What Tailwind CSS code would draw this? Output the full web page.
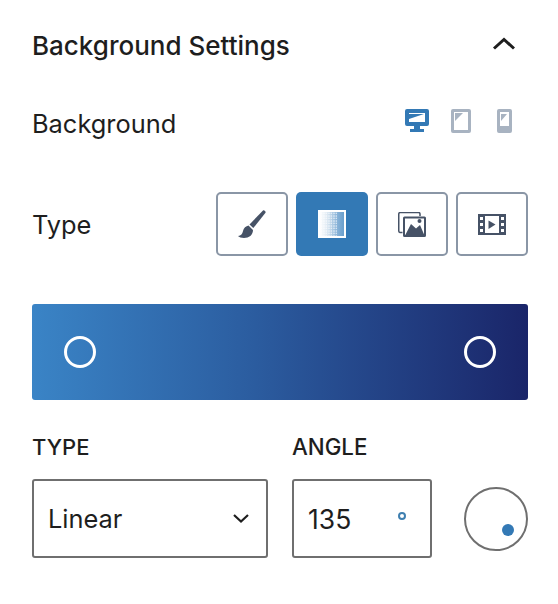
<!DOCTYPE html>
<html lang="en">
<head>
    <meta charset="UTF-8">
    <meta name="viewport" content="width=device-width, initial-scale=1.0">
    <title>Background Settings</title>
    <script src="https://cdn.jsdelivr.net/npm/@tailwindcss/browser@4"></script>
</head>
<body class="bg-white font-['Inter',sans-serif] text-[#1e1e1e] w-[558px] h-[604px] overflow-hidden">
    <div class="pl-8 pr-[30px] pt-[28px]">
        <!-- header -->
        <div class="flex items-center justify-between h-9">
            <h2 class="text-[26px] leading-9 font-medium">Background Settings</h2>
            <svg class="mr-[12px] -mt-[7px]" width="24" height="14" viewBox="0 0 24 14" fill="none">
                <path d="M2 12.500 L12 3.500 L22 12.500" stroke="#1e1e1e" stroke-width="3"/>
            </svg>
        </div>

        <!-- background row -->
        <div class="flex items-center justify-between h-9 mt-[42px]">
            <span class="text-[25.400px] leading-9">Background</span>
            <div class="flex items-center mr-4 -mt-[6px]">
                <svg width="24" height="24" viewBox="0 0 24 24">
                    <path fill-rule="evenodd" d="M2 0h20a2 2 0 0 1 2 2v13a2 2 0 0 1-2 2h-7v3h4v3H5v-3h4v-3H2a2 2 0 0 1-2-2V2a2 2 0 0 1 2-2zM4 4v9h16V4z" fill="#3379b5"/>
                    <path d="M4 5h15L4 10z" fill="#3379b5"/>
                </svg>
                <svg class="ml-[22px]" width="20" height="24" viewBox="0 0 20 24">
                    <path fill-rule="evenodd" d="M2 0h16a2 2 0 0 1 2 2v20a2 2 0 0 1-2 2H2a2 2 0 0 1-2-2V2a2 2 0 0 1 2-2zM3 3v18h14V3z" fill="#a8b3c1"/>
                    <path d="M4 4h8L4 12z" fill="#a8b3c1"/>
                </svg>
                <svg class="ml-[26px]" width="15" height="24" viewBox="0 0 15 24">
                    <path fill-rule="evenodd" d="M2 0h11a2 2 0 0 1 2 2v20a2 2 0 0 1-2 2H2a2 2 0 0 1-2-2V2a2 2 0 0 1 2-2zM3 3v14h9V3z" fill="#a8b3c1"/>
                    <path d="M4 5h6L4 12z" fill="#a8b3c1"/>
                </svg>
            </div>
        </div>

        <!-- type row -->
        <div class="flex items-center justify-between mt-[50px]">
            <span class="text-[25.400px] leading-9 pt-[2px]">Type</span>
            <div class="flex gap-2">
                <button class="w-[72px] h-16 rounded-[5px] border-2 border-[#8a96a6] bg-white flex items-center justify-center">
                    <svg width="28" height="28" viewBox="0 0 28 28">
                        <path d="M25 .500c1.200-.800 3 1 2.500 2.300L15.300 18 11.500 14.500z" fill="#465266"/>
                        <path d="M10.500 15.500L15 20c0 5-4 8-9 8-2.500 0-5-1-6-2 4-.500 4.500-3 5-5 .500-3 3-5 5.500-5.500z" fill="#465266"/>
                    </svg>
                </button>
                <button class="w-[72px] h-16 rounded-[5px] bg-[#3379b5] flex items-center justify-center">
                    <svg width="28" height="28" viewBox="0 0 28 28">
                        <defs>
                            <linearGradient id="halftoneFill" x1="0" x2="1" y1="0" y2="0">
                                <stop offset="0" stop-color="#ffffff"/>
                                <stop offset="0.300" stop-color="#dce8f2"/>
                                <stop offset="0.650" stop-color="#8fb7da"/>
                                <stop offset="1" stop-color="#6a9fcc"/>
                            </linearGradient>
                            <pattern id="halftoneDots" width="2.500" height="2.500" patternUnits="userSpaceOnUse">
                                <rect x="0.300" y="0.300" width="1.400" height="1.400" fill="#ffffff"/>
                            </pattern>
                        </defs>
                        <rect width="28" height="28" fill="#ffffff"/>
                        <rect x="2" y="2" width="24" height="24" fill="url(#halftoneFill)"/>
                        <rect x="2" y="2" width="17" height="24" fill="url(#halftoneDots)" opacity="0.800"/>
                    </svg>
                </button>
                <button class="w-[72px] h-16 rounded-[5px] border-2 border-[#8a96a6] bg-white flex items-center justify-center">
                    <svg width="28" height="25" viewBox="0 0 28 25">
                        <path d="M22 4V2a1.500 1.500 0 0 0-1.500-1.500H2A1.500 1.500 0 0 0 .750 2v17a1.500 1.500 0 0 0 1.250 1.500h2.500" fill="none" stroke="#465266" stroke-width="1.500"/>
                        <path fill-rule="evenodd" d="M6.500 4.500h20a1.500 1.500 0 0 1 1.500 1.500v17.500a1.500 1.500 0 0 1-1.500 1.500h-20a1.500 1.500 0 0 1-1.500-1.500V6a1.500 1.500 0 0 1 1.500-1.500zM7 6.500v16.500h19V6.500z" fill="#465266"/>
                        <path d="M7 23.500l6-11.500 5 4.500 4-3.500 4.500 10.500z" fill="#465266"/>
                        <circle cx="21.500" cy="9" r="2" fill="#465266"/>
                    </svg>
                </button>
                <button class="w-[72px] h-16 rounded-[5px] border-2 border-[#8a96a6] bg-white flex items-center justify-center">
                    <svg width="28" height="21" viewBox="0 0 28 21">
                        <path fill-rule="evenodd" d="M0 0h28v21H0zM2 3v3h3V3zM2 9v3h3V9zM2 15v3h3v-3zM23 3v3h3V3zM23 9v3h3V9zM23 15v3h3v-3zM7 2v17h14V2z" fill="#465266"/>
                        <path d="M10.500 6.500l7 4-7 4.500z" fill="#465266"/>
                    </svg>
                </button>
            </div>
        </div>

        <!-- gradient preview -->
        <div class="relative h-24 mt-12 rounded-[3px] bg-[linear-gradient(90deg,#3a84c6_0%,#2b5c9f_45%,#1a2569_100%)]">
            <span class="absolute left-8 top-8 w-8 h-8 rounded-full border-[3px] border-white"></span>
            <span class="absolute right-8 top-8 w-8 h-8 rounded-full border-[3px] border-white"></span>
        </div>

        <!-- type + angle -->
        <div class="flex items-end mt-[35px]">
            <div class="w-[236px]">
                <label class="block text-[22px] leading-6 font-medium mb-5">TYPE</label>
                <div class="h-[79px] rounded-[3px] border-2 border-[#6f6f6f] flex items-center justify-between pl-[14px] pr-[16px]">
                    <span class="text-[25.400px] pt-[2px]">Linear</span>
                    <svg width="18" height="11" viewBox="0 0 18 11" fill="none">
                        <path d="M2 2L9 8.500L16 2" stroke="#1e1e1e" stroke-width="2.200"/>
                    </svg>
                </div>
            </div>
            <div class="w-[140px] ml-6">
                <label class="block text-[22.300px] leading-6 font-medium mb-5">ANGLE</label>
                <div class="relative h-[79px] rounded-[3px] border-2 border-[#6f6f6f] flex items-center pl-[14px]">
                    <span class="text-[26.500px] pt-[2px]">135</span>
                    <span class="absolute left-[104px] top-[31px] w-[8px] h-[8px] rounded-full border-2 border-[#3f7fb0]"></span>
                </div>
            </div>
            <div class="relative w-16 h-16 ml-8 mb-[7px] rounded-full border-2 border-[#6f6f6f]">
                <span class="absolute left-[36px] top-[35px] w-3 h-3 rounded-full bg-[#3379b5]"></span>
            </div>
        </div>
    </div>
</body>
</html>
